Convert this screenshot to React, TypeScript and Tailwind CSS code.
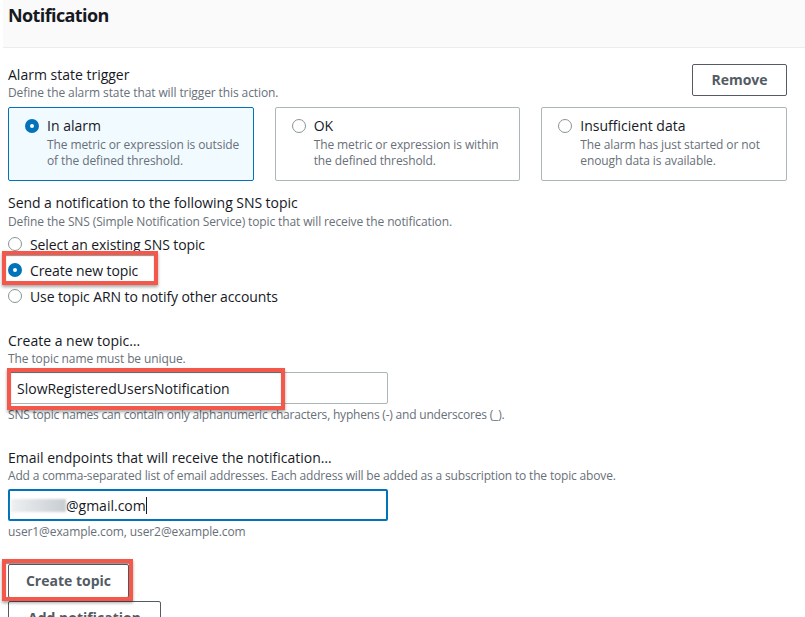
import React from "react";

function Radio({ checked }: { checked?: boolean }) {
  return checked ? (
    <span className="block w-[14px] h-[14px] rounded-full border-[5px] border-[#0073bb] bg-white shrink-0" />
  ) : (
    <span className="block w-[14px] h-[14px] rounded-full border-[1.5px] border-[#879596] bg-white shrink-0" />
  );
}

function RedBox({ className }: { className: string }) {
  return (
    <div
      className={
        "absolute pointer-events-none border-[4px] border-[#f4584a] shadow-[0_2px_3px_rgba(0,0,0,0.35),inset_0_1px_1px_rgba(0,0,0,0.45)] " +
        className
      }
    />
  );
}

function Card({
  checked,
  title,
  lines,
}: {
  checked?: boolean;
  title: string;
  lines: [string, string];
}) {
  return (
    <div
      className={
        "rounded-[2px] border pt-[8px] pb-[11px] pl-[16px] pr-[8px] flex gap-[8px] " +
        (checked ? "border-[#0073bb] bg-[#f1faff]" : "border-[#aab7b8] bg-white")
      }
    >
      <div className="h-[20px] flex items-center">
        <Radio checked={checked} />
      </div>
      <div>
        <div className="text-[14px] leading-[20px] text-[#16191f]">{title}</div>
        <div className="mt-[1px] text-[12px] leading-[16px] tracking-[-0.1px] text-[#687078] whitespace-nowrap">
          <div>{lines[0]}</div>
          <div>{lines[1]}</div>
        </div>
      </div>
    </div>
  );
}

export default function App() {
  return (
    <div className="w-[805px] h-[617px] overflow-hidden bg-white pl-[3px] font-['Open_Sans',sans-serif] text-[#16191f]">
      <div className="h-[48px] bg-[#fafafa] border-b border-[#eaeded] pl-[5px] pt-[3px]">
        <h2 className="text-[18px] font-bold leading-[24px] tracking-[-0.6px] text-[#16191f]">
          Notification
        </h2>
      </div>
      <div className="pl-[5px] pr-[18px] pt-[16px]">
        <div className="flex justify-between items-start">
          <div className="mt-[1px]">
            <div className="text-[14px] leading-[20px]">Alarm state trigger</div>
            <div className="text-[12px] leading-[16px] tracking-[-0.1px] text-[#687078]">
              Define the alarm state that will trigger this action.
            </div>
          </div>
          <button className="h-[32px] w-[95px] rounded-[2px] border border-[#545b64] bg-white text-[14px] font-bold text-[#545b64] leading-[20px]">
            Remove
          </button>
        </div>

        <div className="grid grid-cols-3 gap-[21px] mt-[6px]">
          <Card
            checked
            title="In alarm"
            lines={["The metric or expression is outside", "of the defined threshold."]}
          />
          <Card
            title="OK"
            lines={["The metric or expression is within", "the defined threshold."]}
          />
          <Card
            title="Insufficient data"
            lines={["The alarm has just started or not", "enough data is available."]}
          />
        </div>

        <div className="mt-[12px] text-[14px] leading-[20px] tracking-[-0.05px]">
          Send a notification to the following SNS topic
        </div>
        <div className="mt-[1px] text-[12px] leading-[16px] tracking-[-0.12px] text-[#687078]">
          Define the SNS (Simple Notification Service) topic that will receive the notification.
        </div>
        <div className="mt-[1px]">
          <div className="h-[26px] flex items-center gap-[8px] text-[14px] tracking-[-0.1px]">
            <Radio />
            <span>Select an existing SNS topic</span>
          </div>
          <div className="relative h-[26px] flex items-center gap-[8px] text-[14px] tracking-[-0.1px]">
            <Radio checked />
            <span>Create new topic</span>
            <RedBox className="-left-[6px] -top-[6px] w-[156px] h-[34px]" />
          </div>
          <div className="h-[26px] flex items-center gap-[8px] text-[14px] tracking-[-0.1px]">
            <Radio />
            <span>Use topic ARN to notify other accounts</span>
          </div>
        </div>

        <div className="mt-[22px] text-[14px] leading-[20px]">Create a new topic…</div>
        <div className="text-[12px] leading-[16px] tracking-[-0.1px] text-[#687078]">
          The topic name must be unique.
        </div>
        <div className="relative mt-[5px] w-[380px] h-[32px] rounded-[2px] border border-[#aab7b8] flex items-center pl-[8px] text-[14px]">
          SlowRegisteredUsersNotification
          <RedBox className="-left-[2px] -top-[5px] w-[278px] h-[42px]" />
        </div>
        <div className="mt-[3px] text-[12px] leading-[16px] tracking-[-0.2px] text-[#687078]">
          SNS topic names can contain only alphanumeric characters, hyphens (-) and underscores (_).
        </div>

        <div className="mt-[25px] text-[14px] leading-[20px]">
          Email endpoints that will receive the notification…
        </div>
        <div className="text-[12px] leading-[16px] tracking-[-0.17px] text-[#687078]">
          Add a comma-separated list of email addresses. Each address will be added as a subscription to the topic above.
        </div>
        <div className="mt-[5px] w-[380px] h-[32px] rounded-[2px] border-2 border-[#0073bb] flex items-center pl-[1px] text-[14px]">
          <div className="w-[55px] h-[13px] bg-gradient-to-r from-[#eef0f2] to-[#c8cdd2] blur-[1px]" />
          <span>@gmail.com</span>
          <span className="block w-[1px] h-[17px] bg-[#16191f]" />
        </div>
        <div className="mt-[3px] text-[12px] leading-[16px] tracking-[-0.1px] text-[#687078]">
          user1@example.com, user2@example.com
        </div>

        <div className="relative mt-[24px] w-[121px]">
          <button className="w-[121px] h-[34px] rounded-[2px] border border-[#545b64] bg-white text-[14px] font-bold text-[#545b64] leading-[20px]">
            Create topic
          </button>
          <RedBox className="-left-[6px] -top-[5px] w-[131px] h-[42px]" />
        </div>
        <button className="mt-[3px] w-[153px] h-[34px] rounded-[2px] border border-[#545b64] bg-white text-[14px] font-bold text-[#545b64] leading-[20px]">
          Add notification
        </button>
      </div>
    </div>
  );
}
